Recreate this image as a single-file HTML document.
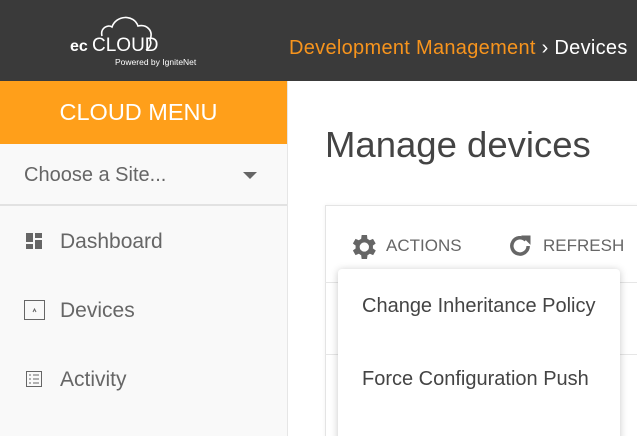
<!DOCTYPE html>
<html><head><meta charset="utf-8"><style>
*{margin:0;padding:0;box-sizing:border-box}
html,body{width:637px;height:436px;overflow:hidden}
body{font-family:"Liberation Sans",sans-serif;background:#fff;position:relative}
.hdr{position:absolute;left:0;top:0;width:637px;height:81px;background:#3a3a3a}
.bc{position:absolute;left:289px;top:37px;font-size:20px;letter-spacing:0.3px;color:#f7941d;white-space:nowrap}
.bc span{color:#fff}
.side{position:absolute;left:0;top:81px;width:288px;height:355px;background:#f9f9f9;border-right:1px solid #e6e6e6}
.menu{height:63px;background:#ff9f1a;color:#fff;font-size:23.5px;text-align:center;line-height:63px;padding-right:10px}
.site{height:62px;border-bottom:2px solid #e2e2e2;font-size:20px;color:#666;padding-left:24px;line-height:62px;position:relative}
.site:after{content:"";position:absolute;right:30px;top:28px;border:7px solid transparent;border-top:7px solid #666;border-bottom:0}
.item{position:absolute;left:60px;font-size:21px;color:#666}
.ttl{position:absolute;left:325px;top:124px;font-size:36.5px;color:#444}
.card{position:absolute;left:325px;top:205px;width:320px;height:240px;border:1px solid #e4e4e4;border-right:none;box-shadow:0 0 4px rgba(0,0,0,.06)}
.tb{position:absolute;font-size:17px;color:#666;top:236px}
.dd{position:absolute;left:338px;top:269px;width:282px;height:180px;background:#fff;border-radius:4px;box-shadow:0 1px 8px rgba(0,0,0,.22)}
.dd div{position:absolute;left:24px;font-size:20px;color:#444;white-space:nowrap}
</style></head><body>
<div class="hdr">
<svg style="position:absolute;left:68px;top:12px" width="150" height="60" viewBox="0 0 150 60">
<path d="M34 24 C32 16 40 12 44 15 C48 3 66 2 70 14 C78 12 86 18 82 28 C84 31 82 36 78 38" fill="none" stroke="#fff" stroke-width="1.6"/>
<text x="2" y="39" fill="#fff" font-family="Liberation Sans" font-size="16" font-weight="bold">ec</text>
<text x="24" y="39" fill="#fff" font-family="Liberation Sans" font-size="19">CLOUD</text>
<text x="47" y="53" fill="#fff" font-family="Liberation Sans" font-size="8.5">Powered by IgniteNet</text>
</svg>
<div class="bc">Development Management <span>› Devices</span></div>
</div>
<div class="side">
<div class="menu">CLOUD MENU</div>
<div class="site">Choose a Site...</div>
<svg style="position:absolute;left:26px;top:152px" width="17" height="17"><rect x="0" y="0" width="7" height="9" fill="#666"/><rect x="9" y="0" width="7" height="5" fill="#666"/><rect x="0" y="11" width="7" height="5" fill="#666"/><rect x="9" y="7" width="7" height="9" fill="#666"/></svg>
<div class="item" style="top:149px">Dashboard</div>
<svg style="position:absolute;left:24px;top:219px" width="21" height="21"><rect x="0.5" y="0.5" width="20" height="19" fill="none" stroke="#666"/><path d="M9 12 L10.5 9 L12 12" fill="none" stroke="#666"/></svg>
<div class="item" style="top:218px">Devices</div>
<svg style="position:absolute;left:26px;top:290px" width="17" height="17"><rect x="0.5" y="0.5" width="15" height="15" fill="none" stroke="#666"/><path d="M3 4h2M7 4h6M3 8h2M7 8h6M3 12h2M7 12h6" stroke="#666"/></svg>
<div class="item" style="top:287px">Activity</div>
</div>
<div class="ttl">Manage devices</div>
<div class="card"></div>
<div style="position:absolute;left:325px;top:282px;width:312px;border-top:1px solid #e6e6e6"></div>
<div style="position:absolute;left:325px;top:354px;width:312px;border-top:1px solid #e6e6e6"></div>
<svg style="position:absolute;left:347px;top:231px" width="32" height="32" viewBox="0 0 24 24"><path fill="#666" d="M19.4 13a7.5 7.5 0 0 0 0-2l2.1-1.6-2-3.5-2.5 1a7 7 0 0 0-1.7-1L15 3h-4l-.4 2.9a7 7 0 0 0-1.7 1l-2.5-1-2 3.5L6.5 11a7.5 7.5 0 0 0 0 2l-2.1 1.6 2 3.5 2.5-1a7 7 0 0 0 1.7 1L11 21h4l.4-2.9a7 7 0 0 0 1.7-1l2.5 1 2-3.5zM13 15.5a3.5 3.5 0 1 1 0-7 3.5 3.5 0 0 1 0 7z"/></svg>
<div class="tb" style="left:386px">ACTIONS</div>
<svg style="position:absolute;left:506px;top:232px" width="28" height="28" viewBox="0 0 24 24"><path d="M19 12a7 7 0 1 1-2-5" fill="none" stroke="#666" stroke-width="3"/><path d="M13 3h8v8z" fill="#666"/></svg>
<div class="tb" style="left:543px">REFRESH</div>
<div class="dd">
<div style="top:26px">Change Inheritance Policy</div>
<div style="top:99px">Force Configuration Push</div>
</div>
</body></html>
